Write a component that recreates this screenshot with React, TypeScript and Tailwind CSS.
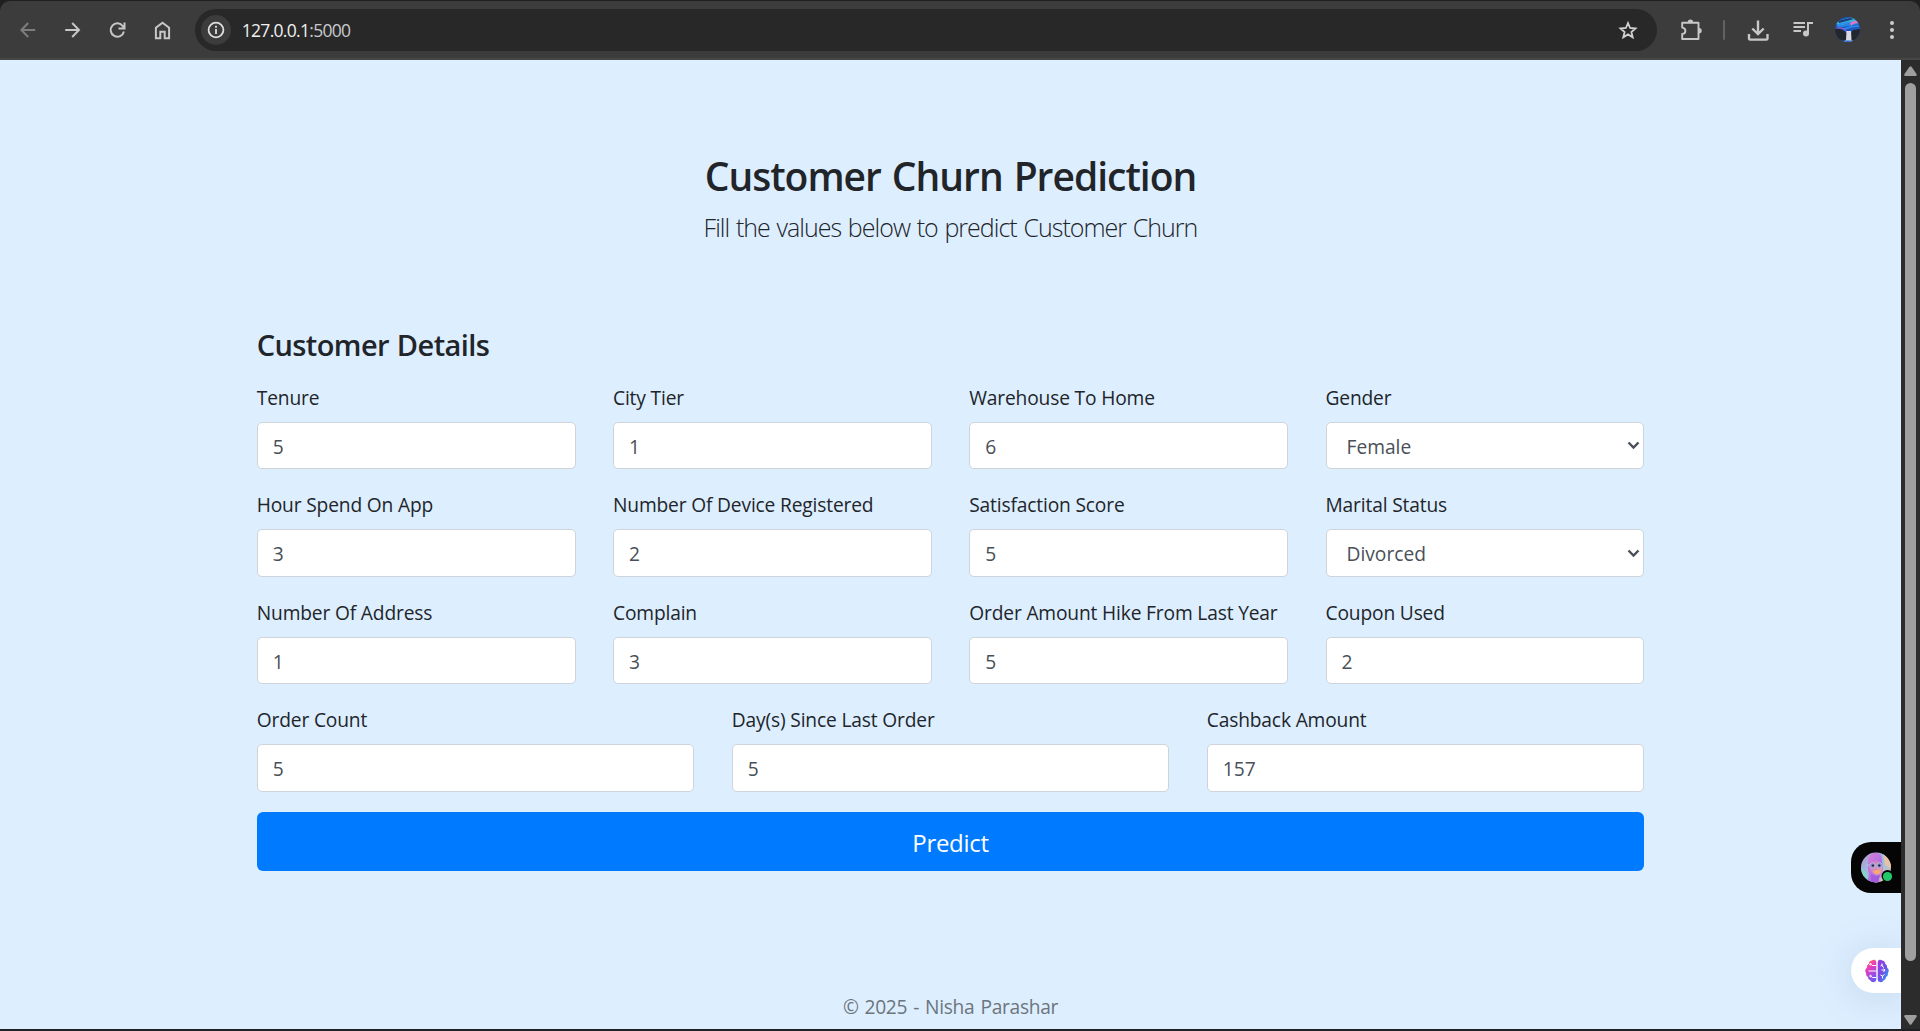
import type { ReactNode } from 'react';

type Field = { label: string; value: string; options?: boolean };

const rows: Field[][] = [
  [
    { label: 'Tenure', value: '5' },
    { label: 'City Tier', value: '1' },
    { label: 'Warehouse To Home', value: '6' },
    { label: 'Gender', value: 'Female', options: true },
  ],
  [
    { label: 'Hour Spend On App', value: '3' },
    { label: 'Number Of Device Registered', value: '2' },
    { label: 'Satisfaction Score', value: '5' },
    { label: 'Marital Status', value: 'Divorced', options: true },
  ],
  [
    { label: 'Number Of Address', value: '1' },
    { label: 'Complain', value: '3' },
    { label: 'Order Amount Hike From Last Year', value: '5' },
    { label: 'Coupon Used', value: '2' },
  ],
  [
    { label: 'Order Count', value: '5' },
    { label: 'Day(s) Since Last Order', value: '5' },
    { label: 'Cashback Amount', value: '157' },
  ],
];

function ToolButton({ children, className = 'w-[44.7px]' }: { children: ReactNode; className?: string }) {
  return <button className={`flex h-full shrink-0 items-center justify-center ${className}`}>{children}</button>;
}

function Toolbar() {
  return (
    <header className="h-[60px] shrink-0 bg-[#1f2020] pt-px">
      <div className="flex h-[59px] items-center rounded-t-[10px] border-b-2 border-[#474747] bg-[#3c3c3c] pl-[5.5px]">
        <ToolButton>
          <svg width="24" height="24" viewBox="0 0 24 24" fill="none" stroke="#7d7d7d" strokeWidth="2">
            <path d="M19.2 12H6M12.2 5 5.4 12l6.8 7" />
          </svg>
        </ToolButton>
        <ToolButton>
          <svg width="24" height="24" viewBox="0 0 24 24" fill="none" stroke="#c7c7c7" strokeWidth="2">
            <path d="M4.200 12H17.500M11.200 5l6.800 7-6.800 7" />
          </svg>
        </ToolButton>
        <ToolButton>
          <svg width="24" height="24" viewBox="0 0 24 24" fill="none" stroke="#c7c7c7" strokeWidth="2">
            <path d="M18.900 13.500A6.700 6.700 0 1 1 17.900 8.200L19 9.800M19.500 4.600V10.400H13.500" />
          </svg>
        </ToolButton>
        <ToolButton>
          <svg width="24" height="24" viewBox="0 0 24 24" fill="none" stroke="#c7c7c7" strokeWidth="2">
            <path d="M5.900 20.300V9.800L12.500 4.800l6.600 5v10.500h-4.400v-6.600h-4.400v6.600z" />
          </svg>
        </ToolButton>
        <div className="ml-[10.5px] flex h-[42px] w-[1462px] shrink-0 items-center rounded-full bg-[#282828] pl-[6px]">
          <span className="flex h-[30px] w-[30px] items-center justify-center rounded-full bg-[#3c3c3c]">
            <svg width="18" height="18" viewBox="0 0 18 18" fill="none" stroke="#dedede" strokeWidth="1.8">
              <circle cx="9" cy="9" r="7.4" />
              <path d="M9 8v5M9 4.8v1.9" />
            </svg>
          </span>
          <span className="ml-[11px] grow pt-[1.5px] text-[17.5px] leading-none tracking-[-0.7px] text-[#c9cacb] [font-family:'Open_Sans',sans-serif]">
            <span className="text-[#f0f0f0]">127.0.0.1</span>:5000
          </span>
          <svg className="mr-[17px]" width="24" height="24" viewBox="0 0 24 24" fill="none" stroke="#d0d0d0" strokeWidth="1.8">
            <path d="m12 5 2.1 5 5.4.5-4.1 3.5 1.3 5.3-4.7-2.9-4.7 2.9L8.600 14 4.500 10.500l5.400-.5z" />
          </svg>
        </div>
        <ToolButton className="ml-[22.500px] w-[24px]">
          <svg width="24" height="24" viewBox="0 0 24 24" fill="none" stroke="#c7c7c7" strokeWidth="1.900" strokeLinejoin="round">
            <path d="M3.200 4.800H19.500V21H3.200v-5c2-.3 3.200-1.400 3.200-3.100S5.200 9.900 3.200 9.600z" />
            <path d="M8.700 4.200a2.700 2.700 0 0 1 5.400 0zM20 10a2.700 2.700 0 0 1 0 5.400z" fill="#c7c7c7" stroke="none" />
          </svg>
        </ToolButton>
        <span className="ml-[19.500px] h-[20px] w-[2px] shrink-0 rounded bg-[#626262]" />
        <ToolButton className="ml-[21px] w-[24px]">
          <svg width="24" height="24" viewBox="0 0 24 24" fill="none" stroke="#c7c7c7" strokeWidth="2.400">
            <path d="M12 2.500V16M6.300 10.500 12 16l5.700-5.500M3 16v4.400q0 1.200 1.200 1.200h16.100q1.200 0 1.200-1.200V16" />
          </svg>
        </ToolButton>
        <ToolButton className="ml-[21px] w-[24px]">
          <svg width="24" height="24" viewBox="0 0 24 24" fill="none" stroke="#c7c7c7" strokeWidth="2">
            <path d="M2.500 5h11.500M2.500 9h11.500M2.500 13h7.500M17 16V5h5" />
            <circle cx="15" cy="15.500" r="3" fill="#c7c7c7" stroke="none" />
          </svg>
        </ToolButton>
        <ToolButton className="ml-[20px] w-[25px]">
          <svg width="25" height="25" viewBox="0 0 25 25">
            <clipPath id="profile"><circle cx="12.500" cy="12.500" r="12.500" /></clipPath>
            <g clipPath="url(#profile)">
              <rect width="25" height="25" fill="#1d56bd" />
              <path d="M0 5 17 0h8v5L3 9z" fill="#3fb5d6" />
              <path d="M3 4 15 1l4 1L4 6z" fill="#163b75" />
              <path d="m1 10 15-5 9-1v3L8 10z" fill="#2783df" />
              <path d="M15 6q5-3 9-2v2q-6 0-8 3z" fill="#e773c4" />
              <path d="m2 8 12-3M9 12q7-3 15-3" fill="none" stroke="#2a8df0" strokeWidth="1.500" />
              <path d="M0 12q7-1 11 4h5l2-3 7-1v13H0z" fill="#22262d" />
              <path d="M2 11q7-1 10 4h4" fill="none" stroke="#b45cc4" strokeWidth="1" />
              <path d="M11.500 14H16l.5 9 3 2H8l3-2z" fill="#dad8e4" />
              <path d="M6 23.500h14V25H6z" fill="#276bd0" />
            </g>
          </svg>
        </ToolButton>
        <ToolButton className="ml-[20px] w-[24px]">
          <svg width="24" height="24" viewBox="0 0 24 24" fill="#cccccc">
            <circle cx="12" cy="5" r="2" />
            <circle cx="12" cy="12" r="2" />
            <circle cx="12" cy="19" r="2" />
          </svg>
        </ToolButton>
      </div>
    </header>
  );
}

function FormField({ label, value, options }: Field) {
  const box =
    'block h-[47.5px] w-full appearance-none rounded-[5px] border border-[#ced4da] bg-white text-[19.2px] text-[#495057] outline-none';
  return (
    <label className="block min-w-0">
      <span className="block h-[40px] whitespace-nowrap pt-[1px] text-[19.2px] leading-[30px] tracking-[-0.16px] text-[#212529]">{label}</span>
      {options ? (
        <span className="relative block">
          <select className={`${box} pl-[20px] pt-[3.2px]`} defaultValue={value}>
            <option>{value}</option>
          </select>
          <svg className="absolute right-[4px] top-[19.5px]" width="13" height="9" viewBox="0 0 13 9" fill="none" stroke="#495057" strokeWidth="2.400">
            <path d="m1.500 1.500 5 5 5-5" />
          </svg>
        </span>
      ) : (
        <input className={`${box} px-[15px] pt-[1.5px]`} defaultValue={value} />
      )}
    </label>
  );
}

function Scrollbar() {
  return (
    <div className="flex w-[19px] shrink-0 flex-col items-center bg-[#2c2c2c]">
      <svg className="mt-[6px]" width="13" height="11" viewBox="0 0 13 11" fill="#9f9f9f">
        <path d="M5.500.8q1-1 2 0l5 7.200q.9 2-1 2H1.500q-1.900 0-1-2z" />
      </svg>
      <div className="mt-[6px] h-[878px] w-[11px] rounded-full bg-[#9f9f9f]" />
      <svg className="mt-[54px]" width="13" height="11" viewBox="0 0 13 11" fill="#9f9f9f">
        <path d="M5.500 9.200q1 1 2 0l5-7.200q.9-2-1-2H1.500q-1.900 0-1 2z" />
      </svg>
    </div>
  );
}

function AssistantTab() {
  return (
    <div className="absolute right-0 top-[782px] flex h-[50.5px] w-[50px] items-center rounded-l-[20px] bg-[#050506] pl-[10px]">
      <svg width="33" height="33" viewBox="0 0 33 33">
        <defs>
          <linearGradient id="sky" x1="0" y1="0" x2="1" y2="1">
            <stop offset="0" stopColor="#b094cc" />
            <stop offset=".5" stopColor="#9cc3e8" />
            <stop offset="1" stopColor="#efbd92" />
          </linearGradient>
          <linearGradient id="hair" x1="0" y1="0" x2="1" y2="1">
            <stop offset="0" stopColor="#e07fd0" />
            <stop offset=".6" stopColor="#b070e4" />
            <stop offset="1" stopColor="#f5a8a0" />
          </linearGradient>
          <linearGradient id="skin" x1="0" y1="0" x2="1" y2="1">
            <stop offset="0" stopColor="#c878d8" />
            <stop offset="1" stopColor="#f3a08c" />
          </linearGradient>
          <clipPath id="face"><circle cx="15" cy="16.500" r="15" /></clipPath>
        </defs>
        <g clipPath="url(#face)">
          <rect width="33" height="33" fill="url(#sky)" />
          <path d="M0 17q6 2 7 15H0z" fill="#86d2c5" />
          <path d="M22 2q8 4 9 16l-7-4z" fill="#e9c2a4" />
          <path d="M7 12Q7 3 13 2q8-1 8 7l1 7q0 9-4 12l3 5H5q4-9 2-13z" fill="url(#hair)" />
          <path d="M9 12q5-4 11 0l1 6q-1 5-5 6-5-1-7-6z" fill="url(#skin)" />
          <path d="M10 23q3 3 9 1l-2 8h-7z" fill="#a35be0" />
          <path d="M12 20.500q4-3 8 0l-2 2h-4z" fill="#f6ab70" />
          <circle cx="11.500" cy="14.500" r="2.700" fill="#8b80bd" stroke="#b8c8f0" strokeWidth=".8" />
          <circle cx="18.500" cy="14.500" r="2.700" fill="#8b80bd" stroke="#b8c8f0" strokeWidth=".8" />
          <path d="M5 14h3.500" stroke="#b8bee8" />
          <circle cx="12" cy="14.500" r="1.100" fill="#202034" />
          <circle cx="18.300" cy="14.500" r="1.100" fill="#202034" />
        </g>
        <circle cx="26.500" cy="25" r="6" fill="#050506" />
        <circle cx="26.500" cy="25.500" r="4.600" fill="#22c76b" />
      </svg>
    </div>
  );
}

function BrainTab() {
  return (
    <div className="absolute right-0 top-[888px] flex h-[45px] w-[50px] items-center rounded-l-full bg-white pl-[13.5px] shadow-[0_4px_40px_rgba(60,110,140,0.18)]">
      <svg width="24" height="24" viewBox="0 0 24 24" fill="none">
        <defs>
          <linearGradient id="left" x1="0" y1="0" x2=".4" y2="1">
            <stop offset="0" stopColor="#fb8b35" />
            <stop offset=".45" stopColor="#e83bbd" />
            <stop offset="1" stopColor="#7656f0" />
          </linearGradient>
          <linearGradient id="right" x1="0" y1="0" x2="1" y2="1">
            <stop offset="0" stopColor="#9a3be0" />
            <stop offset=".5" stopColor="#744fe4" />
            <stop offset="1" stopColor="#18b1ff" />
          </linearGradient>
        </defs>
        <path d="M11.300 3.500v17q0 2.200-2.200 2.600-2.800.4-3.900-1.800-2.400-.6-2.200-3.300-2-.8-2-3.200 0-1-.8-2.800-.2-2 1.600-3.300-.2-3 2-4Q4.200 1.700 6.800 1.500 8 .4 9.600.8q1.700.7 1.700 2.700z" fill="url(#left)" />
        <path d="M12.700 3.500v17q0 2.200 2.200 2.600 2.800.4 3.900-1.800 2.400-.6 2.200-3.300 2-.8 2-3.200 0-1 .8-2.800.2-2-1.600-3.300.2-3-2-4-.4-3-3-3.200Q16 .4 14.400.8q-1.700.7-1.700 2.700z" fill="url(#right)" />
        <g stroke="#fff" strokeWidth="1">
          <path d="M11 6.500H7.200L5.700 5M3.500 12h8M11 18.500H7.500L6 17.300M15.500 7l2-1.300M17 4.500V7l2 1.500M16.500 11h3.500M18.500 9.800l1.500 1.200-1.500 2M15.500 16l2 1 2-1.500M17.500 17v2.500" />
          <circle cx="5.500" cy="5.300" r=".8" />
          <circle cx="5.500" cy="17" r=".8" />
        </g>
      </svg>
    </div>
  );
}

export default function App() {
  return (
    <div className="flex h-[1031px] w-[1920px] flex-col overflow-hidden border-b-2 border-[#202124] bg-[#ddeeff]">
      <Toolbar />
      <div className="flex min-h-0 grow">
        <main className="relative min-w-0 grow overflow-hidden bg-[#ddeeff] text-[#212529] [font-family:'Open_Sans',sans-serif]">
          <div className="mx-auto w-[1387.5px]">
            <header className="pt-[90px] text-center">
              <h1 className="h-[58px] whitespace-nowrap text-[39px] font-semibold leading-[52px] tracking-[-1px] [word-spacing:1.8px]">Customer Churn Prediction</h1>
              <p className="h-[38px] whitespace-nowrap text-[25px] font-light leading-[38px] tracking-[-0.98px] [word-spacing:1.2px]">Fill the values below to predict Customer Churn</p>
            </header>
            <h2 className="mt-[81px] h-[54.9px] text-[29px] font-semibold leading-[36px] tracking-[-0.6px] [word-spacing:1px]">Customer Details</h2>
            <form className="flex flex-col gap-[20px]">
              {rows.map((row, i) => (
                <div key={i} className={row.length === 4 ? 'grid grid-cols-4 gap-[37.5px]' : 'grid grid-cols-3 gap-[37.5px]'}>
                  {row.map((field) => (
                    <FormField key={field.label} {...field} />
                  ))}
                </div>
              ))}
              <button type="button" className="h-[59.5px] rounded-[6px] bg-[#007bff] pt-[2px] text-[24px] tracking-[-0.3px] text-white">
                Predict
              </button>
            </form>
            <footer className="mt-[120.8px] text-center text-[19.2px] leading-[30px] tracking-[-0.3px] [word-spacing:1.3px] text-[#6c757d]">© 2025 - Nisha Parashar</footer>
          </div>
          <AssistantTab />
          <BrainTab />
        </main>
        <Scrollbar />
      </div>
    </div>
  );
}
